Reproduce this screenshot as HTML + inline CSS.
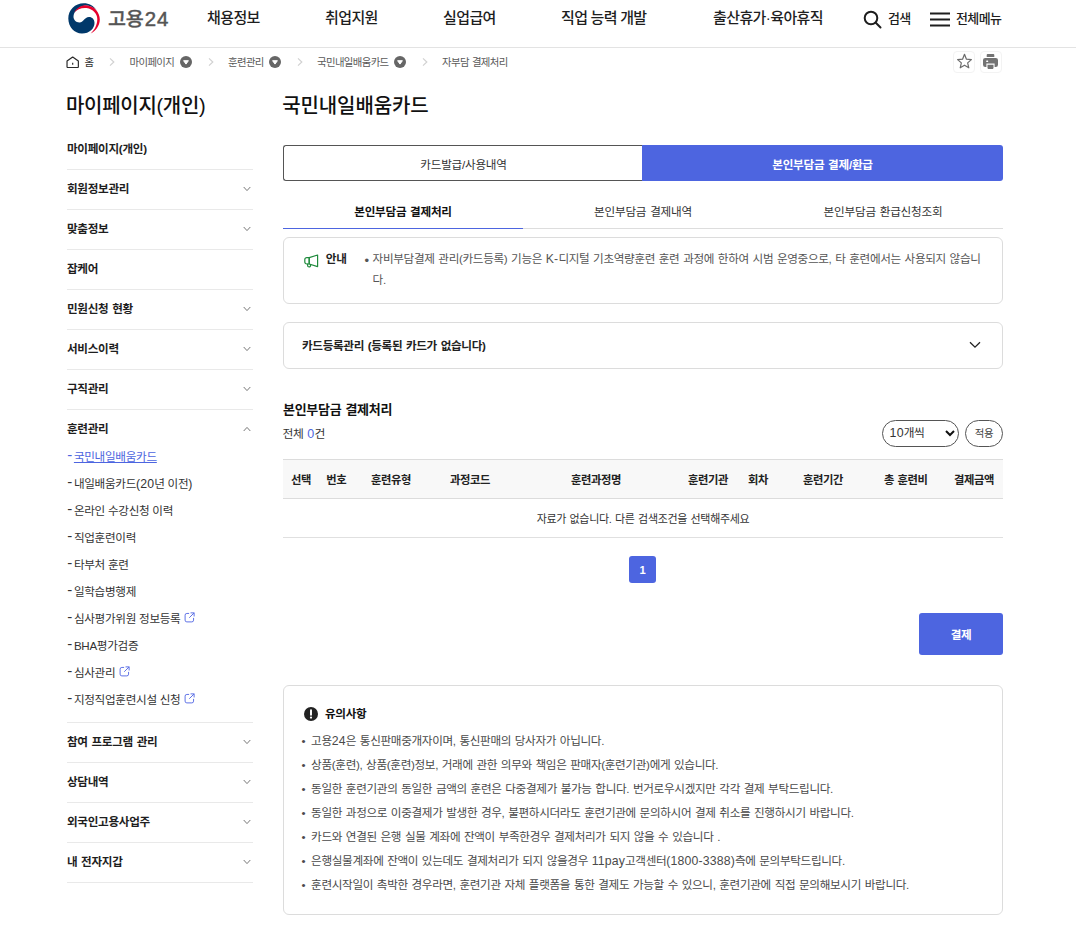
<!DOCTYPE html>
<html lang="ko">
<head>
<meta charset="utf-8">
<title>국민내일배움카드 - 고용24</title>
<style>
*{box-sizing:border-box;margin:0;padding:0}
html,body{width:1076px;height:926px;overflow:hidden;background:#fff}
body{font-family:"Liberation Sans","Noto Sans CJK KR",sans-serif;color:#1e1e1e;font-size:12px;position:relative;letter-spacing:-0.33px;word-spacing:0.8px}
a{color:inherit;text-decoration:none}
.abs{position:absolute;white-space:nowrap}
/* header */
#hdr{position:absolute;left:0;top:0;width:1076px;height:48px;border-bottom:1px solid #e3e3e3;background:#fff}
#logo{position:absolute;left:67px;top:2px;width:34px;height:34px}
#brand{position:absolute;left:108px;top:4px;font-size:19.4px;line-height:30px;color:#555;font-weight:500;letter-spacing:0;white-space:nowrap}
#brand .k{font-size:19.6px;letter-spacing:-0.3px;-webkit-text-stroke:.3px #555}
#brand .d{font-size:20.4px;letter-spacing:1px;margin-left:1.2px;-webkit-text-stroke:.5px #555}
.nav{position:absolute;top:7px;font-size:15px;line-height:22px;font-weight:500;color:#1e1e1e;letter-spacing:-0.6px;word-spacing:-0.4px}
.util{position:absolute;top:9px;font-size:13px;line-height:20px;font-weight:500;letter-spacing:-0.6px}
/* breadcrumb */
.bc{position:absolute;top:55.4px;font-size:10.4px;line-height:16px;color:#5a5a5a;letter-spacing:-0.62px}
.bcsep{position:absolute;top:57px;width:6px;height:10px}
.bcdot{position:absolute;top:56px;width:12px;height:12px}
/* sidebar */
#stitle{left:66px;top:91px;font-size:20px;line-height:30px;font-weight:500;letter-spacing:-0.3px;color:#111}
.sm{position:absolute;left:67px;width:186px;height:40px;border-bottom:1px solid #e9e9e9;font-size:11.6px;font-weight:700;line-height:38px;letter-spacing:-0.3px;padding-left:0;color:#1e1e1e}
.sm svg{position:absolute;right:2px;top:16px;width:8px;height:6px}
.ss{position:absolute;left:67px;word-spacing:0;font-size:11.6px;line-height:18px;color:#333;letter-spacing:-0.3px;white-space:nowrap}
.ss i{font-style:normal;font-size:15px;line-height:0;position:relative;top:-.6px;margin-right:1.6px;margin-left:.3px;letter-spacing:0}
.ss svg{width:11px;height:11px;vertical-align:-.8px;margin-left:3.4px}
/* main */
#mtitle{left:282.2px;top:91px;font-size:20px;line-height:30px;font-weight:500;letter-spacing:-0.1px;color:#111}
.tab1{position:absolute;top:145px;height:36px;font-size:11.6px;line-height:38.6px;text-align:center;letter-spacing:-0.25px}
.tab2{position:absolute;top:192px;height:37px;width:240px;font-size:11.6px;line-height:40px;text-align:center;border-bottom:1px solid #ddd;color:#333;letter-spacing:-0.2px}
.box{position:absolute;left:283px;width:720px;border:1px solid #dcdcdc;border-radius:6px;background:#fff}
.th{position:absolute;top:0;font-size:11.3px;font-weight:700;line-height:40px;color:#222;letter-spacing:-0.4px;white-space:nowrap}
.note{position:absolute;left:17.5px;font-size:11.6px;line-height:18px;color:#4a4a4a;letter-spacing:-0.33px;white-space:nowrap}
.note b{font-weight:400;margin-right:2.2px}
.l{font-size:1.06em;letter-spacing:.15px}
</style>
</head>
<body>
<div id="hdr">
<svg id="logo" style="left:68.3px;top:2.9px;width:32px;height:31px" viewBox="0 0 32 31"><path fill="#00386a" d="M15.8 .2C7 .2 .2 7 .3 15.5C.4 24 6.5 30.6 14 30.5C21.5 30.4 26.6 25.5 26.5 19.7C26.4 16 24 13.8 21 13.9C18.5 14 17.3 15.3 16.2 16.6C15 18 13.5 19.6 11.3 19.5C8 19.4 5.4 16.8 5.5 13.5C5.6 11.5 6.2 10.3 6.8 9.2C9 5.5 13 3 17 2.4C21 2.2 25.5 4 28.7 7.3C25.5 2.5 21 .2 15.8 .2Z"/><path fill="#e6002d" d="M6.1 9.6C8.5 5.5 12.5 2.6 17 2.3C22 2.2 26 4.5 28.5 7.4C30.5 10 31.8 13 31.8 16.4C31.8 22.5 27.5 28 22.7 30.5C26.5 27 29.3 22 29.3 16C29.3 11 25 6 18.6 5.1C13.5 4.6 9 6.5 6.1 9.6Z"/></svg>
<div id="brand"><span class="k">고용</span><span class="d">24</span></div>
<a class="nav" style="left:207px">채용정보</a>
<a class="nav" style="left:325px">취업지원</a>
<a class="nav" style="left:443px">실업급여</a>
<a class="nav" style="left:561px">직업 능력 개발</a>
<a class="nav" style="left:713px">출산휴가·육아휴직</a>
<svg class="abs" style="left:863px;top:10px;width:19px;height:19px" viewBox="0 0 19 19" fill="none" stroke="#1e1e1e" stroke-width="2" stroke-linecap="round"><circle cx="8" cy="8" r="6.3"/><path d="M12.8 12.8L17.5 17.5"/></svg>
<a class="util" style="left:888px">검색</a>
<svg class="abs" style="left:930px;top:12px;width:20px;height:15px" viewBox="0 0 20 15" fill="none" stroke="#1e1e1e" stroke-width="1.8"><path d="M0 1.5H20M0 7.5H20M0 13.5H20"/></svg>
<a class="util" style="left:956px">전체메뉴</a>
</div>
<svg class="abs" style="left:66.4px;top:55.7px;width:13.4px;height:12.6px" preserveAspectRatio="none" viewBox="0 0 13 13" fill="none" stroke="#2a2a2a" stroke-width="1.15" stroke-linejoin="round"><path d="M1 5.2L6.5 1L12 5.2V11a1 1 0 0 1-1 1H2a1 1 0 0 1-1-1z"/><path d="M6.5 7V9" stroke-linecap="butt"/></svg>
<a class="bc" style="left:84.5px;color:#333">홈</a>
<svg class="bcsep" style="left:109px" viewBox="0 0 6 10" fill="none" stroke="#d2d2d2" stroke-width="1.2"><path d="M1 1.4L4.8 5L1 8.6"/></svg>
<a class="bc" style="left:129.5px">마이페이지</a>
<svg class="bcdot" style="left:180px" viewBox="0 0 12 12"><circle cx="6" cy="6" r="6" fill="#666"/><path d="M3.6 4.7h4.8L6 8.1z" fill="#fff" stroke="#fff" stroke-width="1" stroke-linejoin="round"/></svg>
<svg class="bcsep" style="left:207.5px" viewBox="0 0 6 10" fill="none" stroke="#d2d2d2" stroke-width="1.2"><path d="M1 1.4L4.8 5L1 8.6"/></svg>
<a class="bc" style="left:228px">훈련관리</a>
<svg class="bcdot" style="left:269px" viewBox="0 0 12 12"><circle cx="6" cy="6" r="6" fill="#666"/><path d="M3.6 4.7h4.8L6 8.1z" fill="#fff" stroke="#fff" stroke-width="1" stroke-linejoin="round"/></svg>
<svg class="bcsep" style="left:296.5px" viewBox="0 0 6 10" fill="none" stroke="#d2d2d2" stroke-width="1.2"><path d="M1 1.4L4.8 5L1 8.6"/></svg>
<a class="bc" style="left:317px">국민내일배움카드</a>
<svg class="bcdot" style="left:394px" viewBox="0 0 12 12"><circle cx="6" cy="6" r="6" fill="#666"/><path d="M3.6 4.7h4.8L6 8.1z" fill="#fff" stroke="#fff" stroke-width="1" stroke-linejoin="round"/></svg>
<svg class="bcsep" style="left:421.5px" viewBox="0 0 6 10" fill="none" stroke="#d2d2d2" stroke-width="1.2"><path d="M1 1.4L4.8 5L1 8.6"/></svg>
<a class="bc" style="left:442px">자부담 결제처리</a>
<div class="abs" style="left:953px;top:51px;width:21.5px;height:21.5px;border:1px solid #f3f3f3;border-radius:4px"></div>
<div class="abs" style="left:980px;top:51px;width:22px;height:21.5px;border:1px solid #f3f3f3;border-radius:4px"></div>
<svg class="abs" style="left:955.5px;top:53.3px;width:17px;height:16.2px" viewBox="0 0 17 16.2" fill="none" stroke="#6b6b6b" stroke-width="1.2" stroke-linejoin="round"><path d="M8.5 1.3L10.45 6.2L15.4 6.6L11.65 9.9L12.8 14.8L8.5 12.2L4.2 14.8L5.35 9.9L1.6 6.6L6.55 6.2Z"/></svg>
<svg class="abs" style="left:983.1px;top:53.8px;width:15px;height:15.2px" viewBox="0 0 15 15.2"><path fill="#737373" d="M4.6 0H10.4A.9.9 0 0 1 11.3.9V2.9H3.7V.9A.9.9 0 0 1 4.6 0Z"/><path fill="#737373" d="M2.2 3.9H12.8A2.2 2.2 0 0 1 15 6.1V10.8A2.2 2.2 0 0 1 12.8 13H11.6V9.5H3.4V13H2.2A2.2 2.2 0 0 1 0 10.8V6.1A2.2 2.2 0 0 1 2.2 3.9Z"/><path fill="#737373" d="M4.5 10.7H10.5V13.6A1.6 1.6 0 0 1 8.9 15.2H6.1A1.6 1.6 0 0 1 4.5 13.6Z"/><rect x="3.2" y="6.6" width="2" height="1.3" rx=".5" fill="#fff"/></svg>
<div class="abs" id="stitle">마이페이지(개인)</div>
<a class="sm" style="top:130px">마이페이지(개인)</a>
<a class="sm" style="top:170px">회원정보관리<svg viewBox="0 0 8 6" fill="none" stroke="#777" stroke-width="1"><path d="M.7 1L4 4.6L7.3 1"/></svg></a>
<a class="sm" style="top:210px">맞춤정보<svg viewBox="0 0 8 6" fill="none" stroke="#777" stroke-width="1"><path d="M.7 1L4 4.6L7.3 1"/></svg></a>
<a class="sm" style="top:250px">잡케어</a>
<a class="sm" style="top:290px">민원신청 현황<svg viewBox="0 0 8 6" fill="none" stroke="#777" stroke-width="1"><path d="M.7 1L4 4.6L7.3 1"/></svg></a>
<a class="sm" style="top:330px">서비스이력<svg viewBox="0 0 8 6" fill="none" stroke="#777" stroke-width="1"><path d="M.7 1L4 4.6L7.3 1"/></svg></a>
<a class="sm" style="top:370px">구직관리<svg viewBox="0 0 8 6" fill="none" stroke="#777" stroke-width="1"><path d="M.7 1L4 4.6L7.3 1"/></svg></a>
<a class="sm" style="top:410px;border-bottom:0">훈련관리<svg viewBox="0 0 8 6" fill="none" stroke="#777" stroke-width="1"><path d="M.7 5L4 1.4L7.3 5"/></svg></a>
<div class="ss" style="top:447.5px;color:#4d65e0"><i>-</i><a style="text-decoration:underline">국민내일배움카드</a></div>
<div class="ss" style="top:474.5px"><i>-</i><a>내일배움카드<span class="l">(20</span>년 이전<span class="l">)</span></a></div>
<div class="ss" style="top:501.5px"><i>-</i><a>온라인 수강신청 이력</a></div>
<div class="ss" style="top:528.5px"><i>-</i><a>직업훈련이력</a></div>
<div class="ss" style="top:555.5px"><i>-</i><a>타부처 훈련</a></div>
<div class="ss" style="top:582.5px"><i>-</i><a>일학습병행제</a></div>
<div class="ss" style="top:609.5px"><i>-</i><a>심사평가위원 정보등록</a><svg viewBox="0 0 10 10" fill="none" stroke="#5d70e6" stroke-width=".9" stroke-linecap="round" stroke-linejoin="round"><path d="M4.3 1.3H2.6A1.6 1.6 0 0 0 1 2.9V7.4A1.6 1.6 0 0 0 2.6 9H7.1A1.6 1.6 0 0 0 8.7 7.4V5.7"/><path d="M6.3 .8H9.2V3.7M9 1L5 5"/></svg></div>
<div class="ss" style="top:636.5px"><i>-</i><a>BHA평가검증</a></div>
<div class="ss" style="top:663.5px"><i>-</i><a>심사관리</a><svg viewBox="0 0 10 10" fill="none" stroke="#5d70e6" stroke-width=".9" stroke-linecap="round" stroke-linejoin="round"><path d="M4.3 1.3H2.6A1.6 1.6 0 0 0 1 2.9V7.4A1.6 1.6 0 0 0 2.6 9H7.1A1.6 1.6 0 0 0 8.7 7.4V5.7"/><path d="M6.3 .8H9.2V3.7M9 1L5 5"/></svg></div>
<div class="ss" style="top:690.5px"><i>-</i><a>지정직업훈련시설 신청</a><svg viewBox="0 0 10 10" fill="none" stroke="#5d70e6" stroke-width=".9" stroke-linecap="round" stroke-linejoin="round"><path d="M4.3 1.3H2.6A1.6 1.6 0 0 0 1 2.9V7.4A1.6 1.6 0 0 0 2.6 9H7.1A1.6 1.6 0 0 0 8.7 7.4V5.7"/><path d="M6.3 .8H9.2V3.7M9 1L5 5"/></svg></div>
<div class="abs" style="left:67px;top:722px;width:186px;height:1px;background:#e9e9e9"></div>
<a class="sm" style="top:723px">참여 프로그램 관리<svg viewBox="0 0 8 6" fill="none" stroke="#777" stroke-width="1"><path d="M.7 1L4 4.6L7.3 1"/></svg></a>
<a class="sm" style="top:763px">상담내역<svg viewBox="0 0 8 6" fill="none" stroke="#777" stroke-width="1"><path d="M.7 1L4 4.6L7.3 1"/></svg></a>
<a class="sm" style="top:803px">외국인고용사업주<svg viewBox="0 0 8 6" fill="none" stroke="#777" stroke-width="1"><path d="M.7 1L4 4.6L7.3 1"/></svg></a>
<a class="sm" style="top:843px">내 전자지갑<svg viewBox="0 0 8 6" fill="none" stroke="#777" stroke-width="1"><path d="M.7 1L4 4.6L7.3 1"/></svg></a>
<div class="abs" id="mtitle">국민내일배움카드</div>
<a class="tab1" style="left:283px;width:360px;border:1px solid #555;border-right:0;border-radius:3px 0 0 3px;color:#333">카드발급/사용내역</a>
<a class="tab1" style="left:642px;width:361px;background:#4d65e0;color:#fff;font-weight:700;border-radius:0 3px 3px 0;line-height:39.6px">본인부담금 결제/환급</a>
<a class="tab2" style="left:283px;color:#111;font-weight:700;letter-spacing:-0.25px;border-bottom:1.4px solid #4d65e0">본인부담금 결제처리</a>
<a class="tab2" style="left:523px">본인부담금 결제내역</a>
<a class="tab2" style="left:763px">본인부담금 환급신청조회</a>
<div class="box" style="top:237px;height:67px">
<svg class="abs" style="left:20px;top:15.5px;width:15px;height:14px" viewBox="0 0 15 14" fill="none" stroke="#1f8a3c" stroke-width="1.2" stroke-linejoin="round" stroke-linecap="round"><path d="M5.2 3.6L13.6 1V12.6L5.2 10z"/><path d="M5.2 3.6H2.8A2 2 0 0 0 .8 5.6V8A2 2 0 0 0 2.8 10H5.2z"/><path d="M3.6 10.2V11.4A1.5 1.5 0 0 0 6.6 11.4V10.5"/></svg>
<div class="abs" style="left:41.8px;top:11px;font-size:11.6px;font-weight:700;line-height:20px;color:#222">안내</div>
<div class="abs" style="left:80.6px;top:12.5px;font-size:13px;line-height:20px;color:#555">•</div>
<div class="abs" style="left:88.6px;top:11px;width:612px;white-space:normal;word-break:break-all;font-size:11.6px;line-height:20.8px;color:#555;letter-spacing:-0.33px">자비부담결제 관리(카드등록) 기능은 <span class="l">K-</span>디지털 기초역량훈련 훈련 과정에 한하여 시범 운영중으로, 타 훈련에서는 사용되지 않습니다.</div>
</div>
<div class="box" style="top:322px;height:47px">
<div class="abs" style="left:18px;top:13px;font-size:11.6px;font-weight:700;line-height:20px;color:#222">카드등록관리 (등록된 카드가 없습니다)</div>
<svg class="abs" style="left:685.4px;top:18.3px;width:12px;height:8px" viewBox="0 0 12 8" fill="none" stroke="#222" stroke-width="1.3"><path d="M1 1.2L6 6.2L11 1.2"/></svg>
</div>
<div class="abs" style="left:283px;top:399.9px;font-size:13px;font-weight:700;line-height:20px;color:#111;letter-spacing:-0.3px">본인부담금 결제처리</div>
<div class="abs" style="left:282.5px;top:423.6px;font-size:11.8px;line-height:20px;color:#333">전체 <span class="l" style="color:#4d65e0">0</span>건</div>
<div class="abs" style="left:882px;top:420px;width:77px;height:27px;border:1px solid #555;border-radius:14px;font-size:11.7px;line-height:24.4px;padding-left:6.6px;color:#333"><span class="l">10</span>개씩<svg class="abs" style="left:62.3px;top:9.2px;width:10px;height:7px" viewBox="0 0 10 7" fill="none" stroke="#111" stroke-width="2"><path d="M1 1L5 5L9 1"/></svg></div>
<div class="abs" style="left:965px;top:420px;width:38px;height:27px;border:1px solid #555;border-radius:14px;font-size:10.4px;line-height:25px;text-align:center;color:#444">적용</div>
<div class="abs" id="thead" style="left:283px;top:459px;width:720px;height:40px;background:#f8f8f8;border-top:1px solid #dcdcdc;border-bottom:1px solid #dcdcdc">
<span class="th" style="left:8px">선택</span>
<span class="th" style="left:43.3px">번호</span>
<span class="th" style="left:88px">훈련유형</span>
<span class="th" style="left:167px">과정코드</span>
<span class="th" style="left:288px">훈련과정명</span>
<span class="th" style="left:405px">훈련기관</span>
<span class="th" style="left:465px">회차</span>
<span class="th" style="left:520px">훈련기간</span>
<span class="th" style="left:601px">총 훈련비</span>
<span class="th" style="left:671px">결제금액</span>
</div>
<div class="abs" style="left:283px;top:499px;width:720px;height:39px;border-bottom:1px solid #e0e0e0;text-align:center;font-size:11px;line-height:41px;color:#333">자료가 없습니다. 다른 검색조건을 선택해주세요</div>
<div class="abs" style="left:629px;top:556px;width:27px;height:27px;background:#4d65e0;border-radius:3px;color:#fff;font-size:11.2px;font-weight:700;text-align:center;line-height:28px">1</div>
<div class="abs" style="left:919px;top:613px;width:84px;height:42px;background:#4d65e0;border-radius:3px;color:#fff;font-size:11.6px;font-weight:700;text-align:center;line-height:43.4px">결제</div>
<div class="box" style="top:685px;height:230px">
<svg class="abs" style="left:19.7px;top:20.8px;width:14px;height:14px" viewBox="0 0 13 13"><circle cx="6.5" cy="6.5" r="6.5" fill="#222"/><path d="M6.5 3.1V7.2" stroke="#fff" stroke-width="1.8" stroke-linecap="round"/><circle cx="6.5" cy="9.8" r="1.05" fill="#fff"/></svg>
<div class="abs" style="left:41px;top:18px;font-size:11.6px;font-weight:700;line-height:20px;color:#111">유의사항</div>
<div class="note" style="top:45.5px"><b>•</b> 고용<span class="l">24</span>은 통신판매중개자이며, 통신판매의 당사자가 아닙니다.</div>
<div class="note" style="top:69.5px"><b>•</b> 상품(훈련), 상품(훈련)정보, 거래에 관한 의무와 책임은 판매자(훈련기관)에게 있습니다.</div>
<div class="note" style="top:93.5px"><b>•</b> 동일한 훈련기관의 동일한 금액의 훈련은 다중결제가 불가능 합니다. 번거로우시겠지만 각각 결제 부탁드립니다.</div>
<div class="note" style="top:117.5px"><b>•</b> 동일한 과정으로 이중결제가 발생한 경우, 불편하시더라도 훈련기관에 문의하시어 결제 취소를 진행하시기 바랍니다.</div>
<div class="note" style="top:141.5px"><b>•</b> 카드와 연결된 은행 실물 계좌에 잔액이 부족한경우 결제처리가 되지 않을 수 있습니다 .</div>
<div class="note" style="top:165.5px"><b>•</b> 은행실물계좌에 잔액이 있는데도 결제처리가 되지 않을경우 <span class="l">11pay</span>고객센터<span class="l">(1800-3388)</span>측에 문의부탁드립니다.</div>
<div class="note" style="top:189.5px"><b>•</b> 훈련시작일이 촉박한 경우라면, 훈련기관 자체 플랫폼을 통한 결제도 가능할 수 있으니, 훈련기관에 직접 문의해보시기 바랍니다.</div>
</div>
</body>
</html>
